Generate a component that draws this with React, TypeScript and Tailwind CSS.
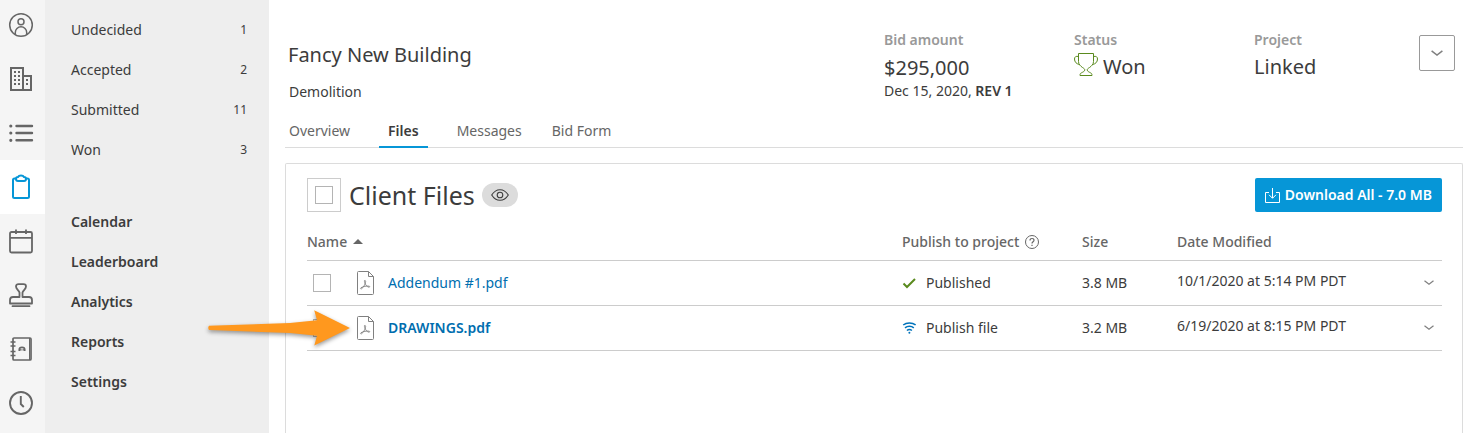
import React, { useState } from 'react';

type NavItem = {
  id: string;
  label: string;
  icon: React.ReactNode;
};

type FileRow = {
  id: number;
  name: string;
  published: boolean;
  size: string;
  modified: string;
  highlighted: boolean;
};

const navItems: NavItem[] = [
  {
    id: 'profile',
    label: 'Profile',
    icon: (
      <g strokeWidth="1.5">
        <circle cx="13" cy="13" r="11.3" />
        <circle cx="13" cy="9.8" r="3" />
        <path d="M7.3 22.2v-1.7a5.7 5.7 0 0 1 11.4 0v1.7" />
      </g>
    ),
  },
  {
    id: 'companies',
    label: 'Companies',
    icon: (
      <g strokeWidth="2">
        <path d="M3 2h12v22H3zM15 10h8v14h-8z" />
        <path strokeDasharray="2 2" d="M7 5v14M11 5v14M19 13v6" />
      </g>
    ),
  },
  {
    id: 'lists',
    label: 'Lists',
    icon: (
      <g strokeWidth="2.4" strokeLinecap="round">
        <path d="M8.5 6H24M8.5 13H24M8.5 20.3H24" />
        <path strokeWidth="3.2" d="M2.8 6h.01M2.8 13h.01M2.8 20.3h.01" />
      </g>
    ),
  },
  {
    id: 'bids',
    label: 'Bids',
    icon: (
      <g strokeWidth="2" strokeLinejoin="round">
        <path d="M8 4.5H6.5A1.5 1.5 0 0 0 5 6v16.5A1.5 1.5 0 0 0 6.5 24h13a1.5 1.5 0 0 0 1.5-1.5V6a1.5 1.5 0 0 0-1.5-1.5H18" />
        <path d="M8 5c0-1.500.8-2 2-2 .6-1.200 1.600-1.500 3-1.500s2.400.3 3 1.500c1.200 0 2 .5 2 2 0 1.400-.7 2-2 2h-6c-1.300 0-2-.6-2-2z" />
      </g>
    ),
  },
  {
    id: 'calendar',
    label: 'Calendar',
    icon: (
      <g strokeWidth="1.8">
        <rect x="2" y="4" width="22" height="20.5" rx="1.5" />
        <path d="M2 9.8h22M8 1.5V6M18 1.5V6" />
      </g>
    ),
  },
  {
    id: 'stamp',
    label: 'Stamp',
    icon: (
      <g strokeWidth="1.8" strokeLinejoin="round" strokeLinecap="round">
        <path d="M11.5 15v-4.500C11 8.500 8 7 8 4.500 8 2.800 9 2.200 10.500 2.200h5c1.500 0 2.500.6 2.500 2.300 0 2.500-3 4-3.500 6V15h6.500c2 0 3 1.200 3 3v3.500H2V18c0-1.800 1-3 3-3z" />
        <path d="M4.5 24.2h17" />
      </g>
    ),
  },
  {
    id: 'contacts',
    label: 'Contacts',
    icon: (
      <g strokeWidth="1.7">
        <rect x="5" y="2" width="18" height="22" rx="1" />
        <path d="M21.5 2v22" strokeWidth="1" />
        <path d="M2.5 6h5M2.5 10h5M2.5 15.500h5M2.500 19.500h5" />
        <path d="M11.3 15v-1.500c0-1.500 1-2.200 2.700-2.200s2.700.7 2.700 2.200V15M12.800 14.500v-1.200M15.300 14.500v-1.200" />
      </g>
    ),
  },
  {
    id: 'history',
    label: 'History',
    icon: (
      <g strokeWidth="1.9">
        <circle cx="13" cy="13" r="11" />
        <path d="M12.8 6v8l3 3" />
      </g>
    ),
  },
];

const bidCounts = [
  { label: 'Undecided', count: 1 },
  { label: 'Accepted', count: 2 },
  { label: 'Submitted', count: 11 },
  { label: 'Won', count: 3 },
];

const sections = ['Calendar', 'Leaderboard', 'Analytics', 'Reports', 'Settings'];

const tabs = ['Overview', 'Files', 'Messages', 'Bid Form'];

const files: FileRow[] = [
  {
    id: 1,
    name: 'Addendum #1.pdf',
    published: true,
    size: '3.8 MB',
    modified: '10/1/2020 at 5:14 PM PDT',
    highlighted: false,
  },
  {
    id: 2,
    name: 'DRAWINGS.pdf',
    published: false,
    size: '3.2 MB',
    modified: '6/19/2020 at 8:15 PM PDT',
    highlighted: true,
  },
];

const checkboxClass =
  'block size-[18px] shrink-0 appearance-none border border-[#b4b4b4] bg-white checked:bg-[#0696d7]';

function Chevron({ className }: { className: string }) {
  return (
    <svg viewBox="0 0 12 6" className={className} fill="none" stroke="currentColor" strokeWidth="1.5">
      <path d="M.6.8 6 5 11.400.8" />
    </svg>
  );
}

function PdfIcon() {
  return (
    <svg viewBox="0 0 17 24" className="h-6 w-[17px] shrink-0 text-[#808080]" fill="none" stroke="currentColor">
      <path d="M1.5.5h10l5 5v17a1 1 0 0 1-1 1h-14a1 1 0 0 1-1-1v-21a1 1 0 0 1 1-1z" />
      <path d="M11.5.5v5h5" />
      <path
        strokeWidth=".9"
        d="M7.500 9.500c1-.4 1.400.5 1 2-.5 2-2 4.800-4 6.300-1 .3-1.300-.5-.5-1.100 2.300-1.200 5.500-2 8.200-1.500.9.300.6 1.100-.3 1-1.800-.3-3.300-2.300-4-4.200-.4-1.200-.7-2.200-.4-2.500z"
      />
    </svg>
  );
}

function Arrow() {
  return (
    <svg
      viewBox="0 0 146 42"
      className="pointer-events-none absolute top-px -left-[100px] h-[42px] w-[146px] drop-shadow-[0_2px_2px_rgba(0,0,0,0.4)]"
    >
      <path
        d="M2 18.700 83 16l27-2.800-2.800-9.900L143 21l-35.700 17.500 2.700-9.700L83 26 2 23q-1.500-2.200 0-4.300z"
        fill="#ff981e"
      />
    </svg>
  );
}

export default function App() {
  const [activeTab, setActiveTab] = useState('Files');

  return (
    <div className="flex min-h-screen bg-white font-['Noto_Sans',sans-serif] text-sm text-[#3c3c3c]">
      {/* Icon rail */}
      <nav className="w-[45px] shrink-0 bg-[#f5f5f5]">
        <ul className="-mt-0.5">
          {navItems.map((item) => (
            <li key={item.id}>
              <a
                href={`#${item.id}`}
                aria-label={item.label}
                className={`flex h-[54px] items-center pl-2 ${
                  item.id === 'bids' ? 'bg-white text-[#0696d7]' : 'text-[#666]'
                }`}
              >
                <svg viewBox="0 0 26 26" className="size-[26px]" fill="none" stroke="currentColor">
                  {item.icon}
                </svg>
              </a>
            </li>
          ))}
        </ul>
      </nav>

      {/* Sidebar */}
      <aside className="w-56 shrink-0 bg-[#eee] pt-2.5 pr-[22px] pl-[26px]">
        <ul>
          {bidCounts.map((item) => (
            <li key={item.label}>
              <a href="#bids" className="flex h-10 items-center justify-between">
                <span>{item.label}</span>
                <span className="text-xs">{item.count}</span>
              </a>
            </li>
          ))}
        </ul>
        <ul className="mt-8 font-semibold">
          {sections.map((section) => (
            <li key={section}>
              <a href="#section" className="flex h-10 items-center">
                {section}
              </a>
            </li>
          ))}
        </ul>
      </aside>

      <main className="flex min-w-0 flex-1 flex-col pr-[13px] pl-4">
        {/* Bid header */}
        <header className="flex pt-[30px]">
          <div className="min-w-0 flex-1 pt-2.5 pl-[3px]">
            <h1 className="text-xl leading-[30px]">Fancy New Building</h1>
            <p className="mt-3 pl-px leading-5">Demolition</p>
          </div>
          <dl className="flex">
            <div className="w-[190px]">
              <dt className="leading-5 font-semibold text-[#999]">Bid amount</dt>
              <dd className="mt-1 text-xl leading-7">$295,000</dd>
              <dd className="leading-[18px]">
                Dec 15, 2020, <span className="font-semibold">REV 1</span>
              </dd>
            </div>
            <div className="w-[180px]">
              <dt className="leading-5 font-semibold text-[#999]">Status</dt>
              <dd className="mt-[3px] flex items-start gap-[5px] text-xl leading-7">
                <svg viewBox="0 0 24 24" className="size-6" fill="none" stroke="#5a8a1e">
                  <path d="M4.500.5h15v8c0 3-2 4.500-4 6-1.600 1-2.300 1.500-2.300 2.500 0 1.200 1.800 2 3.300 2.800 1.200.6 1.500 1.200 1.500 2.700H6c0-1.500.3-2.100 1.500-2.700 1.500-.8 3.300-1.600 3.300-2.800 0-1-.7-1.500-2.300-2.500-2-1.500-4-3-4-6z" />
                  <path d="M4.500 3.500c-2.500-.6-4 .3-4 2.500 0 3 2 5 5 5.500M19.500 3.500c2.500-.6 4 .3 4 2.500 0 3-2 5-5 5.500" />
                </svg>
                Won
              </dd>
            </div>
            <div className="w-[165px]">
              <dt className="leading-5 font-semibold text-[#999]">Project</dt>
              <dd className="mt-[3px] text-xl leading-7">Linked</dd>
            </div>
          </dl>
          <button
            aria-label="More actions"
            className="mt-[5px] mr-2 flex size-9 items-center justify-center rounded-xs border border-[#999] text-[#808080]"
          >
            <Chevron className="h-1.5 w-3" />
          </button>
        </header>

        {/* Tabs */}
        <div role="tablist" className="mt-3 flex gap-3 border-b border-[#dcdcdc] text-[#666]">
          {tabs.map((tab) => (
            <button
              key={tab}
              role="tab"
              aria-selected={activeTab === tab}
              onClick={() => setActiveTab(tab)}
              className={`-mb-px h-[34px] border-b-2 px-[9px] pt-0.5 first:-ml-[5px] ${
                activeTab === tab
                  ? 'mx-2 border-[#0696d7] font-semibold text-[#3c3c3c]'
                  : 'border-transparent'
              }`}
            >
              {tab}
            </button>
          ))}
        </div>

        {/* Client files */}
        <section className="mt-[15px] flex-1 rounded-t-xs border border-b-0 border-[#dcdcdc] pt-3.5 pr-5 pl-[21px]">
          <div className="flex items-center">
            <label className="mr-2 flex size-[34px] items-center justify-center border border-[#ccc]">
              <input type="checkbox" aria-label="Select all files" className={checkboxClass} />
            </label>
            <h2 className="text-[25px] leading-8">Client Files</h2>
            <button
              aria-label="Visibility"
              className="ml-[7px] flex h-6 w-9 items-center justify-center rounded-full bg-[#dcdcdc]"
            >
              <svg viewBox="0 0 18 12" className="h-3 w-[18px]" fill="none" stroke="#3c3c3c" strokeWidth="1.1">
                <path d="M.7 6C3 2.300 5.800.7 9 .7S15 2.300 17.300 6C15 9.700 12.200 11.300 9 11.300S3 9.700.7 6z" />
                <circle cx="9" cy="6" r="2.8" />
              </svg>
            </button>
            <button className="ml-auto flex h-[34px] items-center gap-[5px] rounded-xs bg-[#0696d7] px-2.5 font-semibold text-white">
              <svg viewBox="0 0 15 15" className="size-[15px]" fill="none" stroke="currentColor">
                <path d="M4 4.500H.5v10h14v-10H11M7.500 0v10M4 6.800l3.500 3.500L11 6.800" />
              </svg>
              Download All - 7.0 MB
            </button>
          </div>

          <table className="mt-3 w-full table-fixed text-left">
            <colgroup>
              <col />
              <col className="w-[180px]" />
              <col className="w-[95px]" />
              <col className="w-[225px]" />
              <col className="w-10" />
            </colgroup>
            <thead>
              <tr className="h-9 border-b border-[#ccc] text-[#666]">
                <th className="font-medium">
                  <button className="flex items-center gap-1.5">
                    Name
                    <svg viewBox="0 0 10 5" className="h-[5px] w-2.5" fill="currentColor">
                      <path d="M5 0l5 5H0z" />
                    </svg>
                  </button>
                </th>
                <th className="font-medium">
                  <span className="flex items-center gap-1.5 whitespace-nowrap">
                    Publish to project
                    <svg viewBox="0 0 14 14" className="size-3.5" fill="none" stroke="currentColor">
                      <circle cx="7" cy="7" r="6.5" />
                      <path strokeWidth="1.2" d="M5 5.500c0-1.300.9-2 2-2s2 .7 2 1.800c0 1.500-2 1.500-2 3.200M7 9.700v1.200" />
                    </svg>
                  </span>
                </th>
                <th className="font-medium">Size</th>
                <th className="font-medium">Date Modified</th>
                <th />
              </tr>
            </thead>
            <tbody>
              {files.map((file) => (
                <tr key={file.id} className="h-[45px] border-b border-[#ccc]">
                  <td className="relative">
                    <div className="flex items-center pl-1.5">
                      <input type="checkbox" aria-label={`Select ${file.name}`} className={checkboxClass} />
                      <span className="ml-[26px]">
                        <PdfIcon />
                      </span>
                      <a
                        href="#file"
                        className={`ml-3.5 text-[#006eaf] ${file.highlighted ? 'font-semibold' : ''}`}
                      >
                        {file.name}
                      </a>
                    </div>
                    {file.highlighted && <Arrow />}
                  </td>
                  <td>
                    <div className="flex items-center gap-2.5">
                      {file.published ? (
                        <svg viewBox="0 0 14 12" className="h-3 w-3.5" fill="none" stroke="#5a8a1e" strokeWidth="2">
                          <path d="M1.500 6.500l3.500 3.500 8-8" />
                        </svg>
                      ) : (
                        <svg viewBox="0 0 14 12" className="h-3 w-3.5" fill="none" stroke="#0073bb" strokeWidth="1.5">
                          <path d="M1.200 3c3.400-2.800 9-2.800 12.400 0M3 5.900c2.500-2.200 6.300-2.200 8.800 0M4.900 8.500c1.500-1.300 3.500-1.300 5 0" />
                          <circle cx="7.4" cy="10.8" r="1" fill="#0073bb" stroke="none" />
                        </svg>
                      )}
                      {file.published ? <span>Published</span> : <button>Publish file</button>}
                    </div>
                  </td>
                  <td>{file.size}</td>
                  <td className="pb-1 whitespace-nowrap">{file.modified}</td>
                  <td>
                    <button
                      aria-label={`More options for ${file.name}`}
                      className="ml-[22px] flex h-6 w-3 items-center text-[#808080]"
                    >
                      <Chevron className="h-[5px] w-2.5" />
                    </button>
                  </td>
                </tr>
              ))}
            </tbody>
          </table>
        </section>
      </main>
    </div>
  );
}
